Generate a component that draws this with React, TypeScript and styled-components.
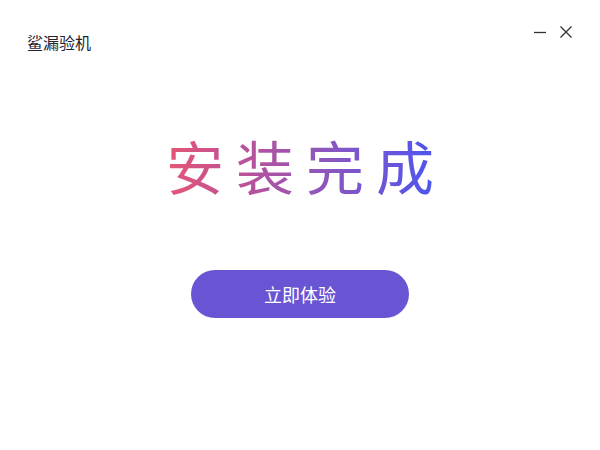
import React from 'react';
import styled, { createGlobalStyle } from 'styled-components';

const GlobalStyle = createGlobalStyle`
    html, body {
        margin: 0;
        padding: 0;
        background: #ffffff;
    }
    body {
        font-family: "Noto Sans CJK SC", "Noto Sans", sans-serif;
    }
`;

const Window = styled.div`
    width: 600px;
    height: 450px;
    background: #ffffff;
    display: flex;
    flex-direction: column;
    align-items: center;
    overflow: hidden;
`;

const Titlebar = styled.div`
    align-self: stretch;
    display: flex;
    justify-content: space-between;
    align-items: flex-start;
    padding: 0 22px 0 27px;
    height: 100px;
`;

const AppName = styled.div`
    margin-top: 30px;
    font-size: 16px;
    line-height: 24px;
    color: #1f2430;
`;

const Controls = styled.div`
    display: flex;
    align-items: center;
    gap: 2px;
    margin-top: 20px;
`;

const ControlButton = styled.button`
    width: 24px;
    height: 24px;
    padding: 0;
    border: none;
    background: transparent;
    display: flex;
    align-items: center;
    justify-content: center;
    color: #333333;
    cursor: pointer;
`;

const Headline = styled.h1`
    margin: 35px 0 0;
    padding-left: 12px;
    font-size: 58px;
    line-height: 60px;
    font-weight: 400;
    letter-spacing: 12px;
    background: linear-gradient(90deg, #ec5670 0%, #b2529e 35%, #8a56c0 60%, #4655f4 100%);
    -webkit-background-clip: text;
    background-clip: text;
    color: transparent;
`;

const PrimaryButton = styled.button`
    margin-top: 75px;
    width: 218px;
    height: 48px;
    border: none;
    border-radius: 24px;
    background: #6954d3;
    color: #ffffff;
    font-family: "Noto Sans CJK SC", sans-serif;
    font-size: 18px;
    cursor: pointer;
`;

export default function App() {
    return (
        <>
            <GlobalStyle />
            <Window>
                <Titlebar>
                    <AppName>鲨漏验机</AppName>
                    <Controls>
                        <ControlButton aria-label="minimize">
                            <svg width="14" height="14" viewBox="0 0 14 14">
                                <line x1="1" y1="7.5" x2="13" y2="7.5" stroke="currentColor" strokeWidth="1.3" />
                            </svg>
                        </ControlButton>
                        <ControlButton aria-label="close">
                            <svg width="14" height="14" viewBox="0 0 14 14">
                                <path d="M1.5 1.5 L12.5 12.5 M12.5 1.5 L1.5 12.5" stroke="currentColor" strokeWidth="1.3" />
                            </svg>
                        </ControlButton>
                    </Controls>
                </Titlebar>
                <Headline>安装完成</Headline>
                <PrimaryButton>立即体验</PrimaryButton>
            </Window>
        </>
    );
}
